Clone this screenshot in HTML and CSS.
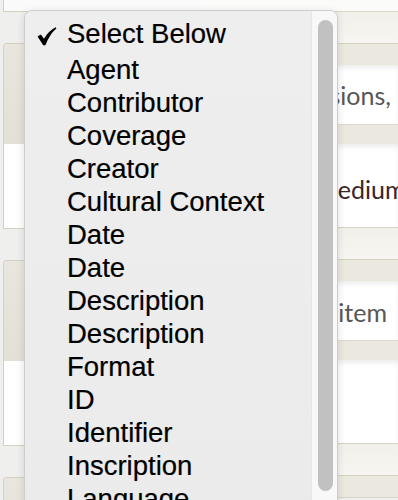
FILE: index.html
```html
<!DOCTYPE html>
<html lang="en">
<head>
  <meta charset="UTF-8" />
  <meta name="viewport" content="width=device-width, initial-scale=1.0"/>
  <title>Metadata Editor</title>
  <link rel="stylesheet" href="styles.css">
</head>
<body>
  <div class="sheet">
    <div class="col-left">
      <div class="lbl-end"></div>
      <div class="lbl-panel">
        <div class="lbl-head"></div>
        <div class="lbl-body"></div>
      </div>
      <div class="lbl-panel">
        <div class="lbl-head"></div>
        <div class="lbl-body"></div>
      </div>
      <div class="lbl-panel">
        <div class="lbl-head"></div>
        <div class="lbl-body"></div>
      </div>
    </div>

    <div class="col-right">
      <div class="fld-end"></div>
      <div class="fld-gap"></div>
      <div class="fld-panel">
        <div class="fld-head"></div>
        <div class="fld-row end"><span class="grey">dimensions,</span></div>
        <div class="fld-head short"></div>
        <div class="fld-row tall"><span class="brown">Medium</span></div>
      </div>
      <div class="fld-gap"></div>
      <div class="fld-panel">
        <div class="fld-head"></div>
        <div class="fld-row end near"><span class="grey">an item</span></div>
        <div class="fld-head short"></div>
        <div class="fld-row tall"></div>
      </div>
      <div class="fld-gap"></div>
      <div class="fld-panel">
        <div class="fld-head"></div>
      </div>
    </div>
  </div>

  <div class="menu">
    <ul class="options">
      <li class="option selected">
        <svg class="check" width="20" height="20" viewBox="0 0 20 20">
          <path d="M0.6 10.6 L3.9 8.4 L7 12.8 Q11 5.2 18.6 1.2 L19.4 2.4 Q12.8 7.8 8.4 19.2 L6.2 19.2 Z" fill="#000"/>
        </svg>Select Below
      </li>
      <li class="option">Agent</li>
      <li class="option">Contributor</li>
      <li class="option">Coverage</li>
      <li class="option">Creator</li>
      <li class="option">Cultural Context</li>
      <li class="option">Date</li>
      <li class="option">Date</li>
      <li class="option">Description</li>
      <li class="option">Description</li>
      <li class="option">Format</li>
      <li class="option">ID</li>
      <li class="option">Identifier</li>
      <li class="option">Inscription</li>
      <li class="option">Language</li>
    </ul>
    <div class="track">
      <div class="thumb"></div>
    </div>
  </div>
</body>
</html>
```

FILE: styles.css
```css
html, body {
  height: 100%;
  margin: 0;
  padding: 0;
  overflow: hidden;
  background-color: #efefed;
  font-family: Lato, "Open Sans", sans-serif;
}

.sheet {
  display: grid;
  grid-template-columns: 200px minmax(0, 1fr);
  height: 500px;
}

/* left side: label cells of each panel */
.col-left {
  display: flex;
  flex-direction: column;
}

.lbl-end {
  height: 11px;
  margin-left: 3px;
  background-color: #fafafa;
  border-left: 1px solid #d3d1bd;
  border-bottom: 1px solid #d3d1bd;
}

.lbl-panel {
  margin-top: 31px;
  margin-left: 3px;
  border: 1px solid #d3d1bd;
  border-right: none;
  border-top-left-radius: 4px;
  overflow: hidden;
}

.lbl-head {
  height: 100px;
  background: linear-gradient(to bottom, #e8e6de, #e3e0d7);
}

.lbl-body {
  height: 84px;
  background: linear-gradient(to right, #ffffff, #f3f3f4);
}

/* right side: field rows */
.col-right {
  display: flex;
  flex-direction: column;
  min-width: 0;
}

.fld-end {
  height: 11px;
  background-color: #fbfbfa;
  border-bottom: 1px solid #d8d6c4;
}

.fld-gap {
  height: 31px;
  background: linear-gradient(to bottom, #f1f0ea, #f6f5f0);
}

.fld-panel {
  border-top: 1px solid #d5d3bf;
  border-bottom: 1px solid #d5d3c5;
}

.fld-head {
  height: 21px;
  background-color: #ebe8df;
}

.fld-head.short {
  height: 19px;
  border-top: 1px solid #dcdad0;
}

.fld-row {
  height: 59px;
  display: flex;
  align-items: center;
  padding-top: 0;
  box-sizing: border-box;
  background-color: #ffffff;
  box-shadow: inset 0 4px 6px -2px rgba(0, 0, 0, 0.09);
  font-size: 25px;
  white-space: nowrap;
  overflow: hidden;
}

.fld-row.tall {
  height: 83px;
  padding-top: 6px;
  padding-left: 115px;
}

.fld-row.end {
  justify-content: flex-end;
  padding-right: 7px;
}

.fld-row.end.near {
  padding-right: 11px;
  padding-top: 2px;
}

.grey {
  color: #575757;
}

.brown {
  color: #3b2626;
}

/* the open select list */
.menu {
  position: absolute;
  top: 10px;
  left: 24px;
  width: 314px;
  height: 520px;
  box-sizing: border-box;
  display: flex;
  background: linear-gradient(to bottom, #eeeeee, #ebebeb);
  border: 1px solid #cdcdcd;
  border-top-left-radius: 8px;
  border-top-right-radius: 8px;
  box-shadow: 0 2px 8px rgba(0, 0, 0, 0.12);
  overflow: hidden;
}

.options {
  flex: 1;
  list-style: none;
  margin: 0;
  padding: 6px 0 0 0;
  font-family: "Liberation Sans", Arial, sans-serif;
  font-size: 27.5px;
  color: #000;
  -webkit-text-stroke: 0.2px #000;
}

.option {
  height: 33px;
  line-height: 33px;
  padding-left: 42px;
  white-space: nowrap;
}

.option.selected {
  margin-bottom: 3px;
}

.check {
  margin-left: -30px;
  margin-right: 10px;
  vertical-align: -3px;
}

.track {
  width: 26px;
  box-sizing: border-box;
  padding: 9px 4px 0 6px;
  background-color: #f8f8f8;
  border-left: 1px solid #e6e6e6;
}

.thumb {
  height: 471px;
  border-radius: 8px;
  background-color: #c1c1c1;
}
```
